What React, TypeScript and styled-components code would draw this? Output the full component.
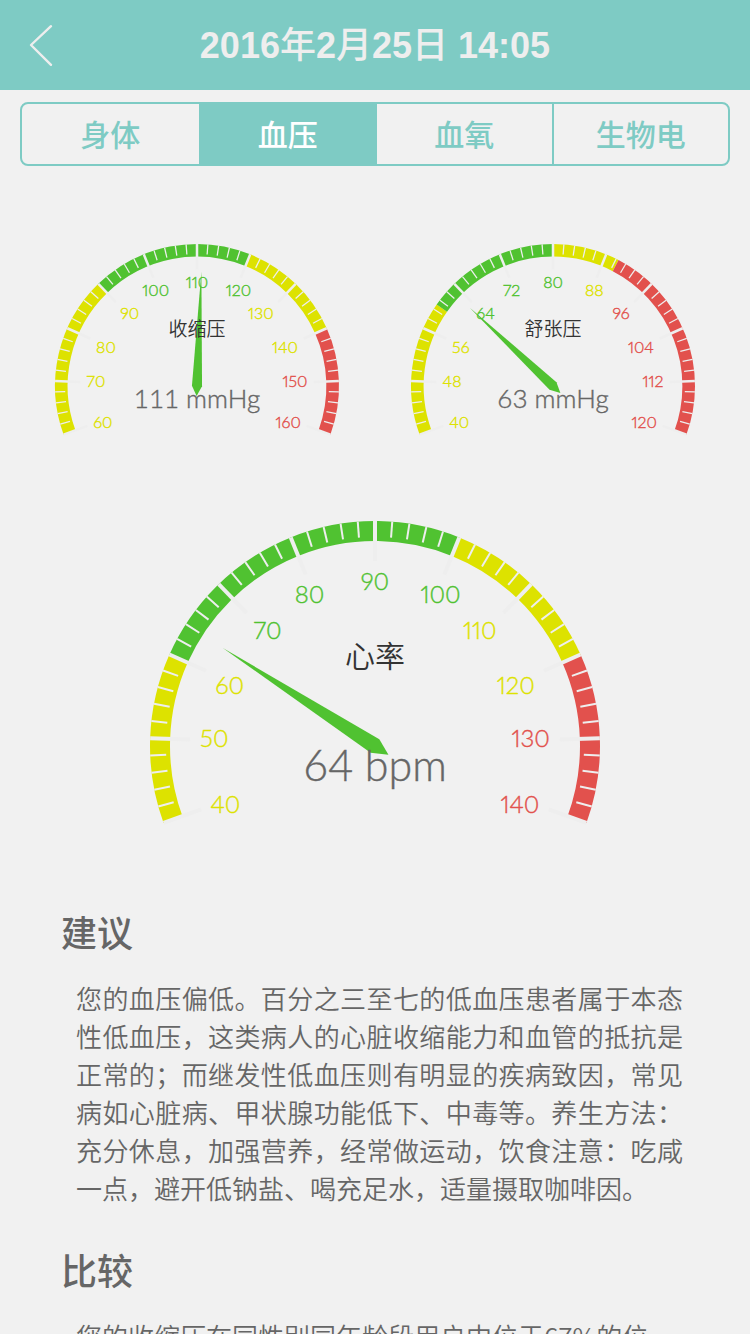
import React from 'react';
import styled, { createGlobalStyle } from 'styled-components';

const color = {
  teal: '#7ecbc4',
  page: '#f1f1f1',
  light: '#eeeeee',
  text: '#666666',
  title: '#333333',
  low: '#dde200',
  good: '#50c231',
  high: '#e2514d',
};

const GlobalStyle = createGlobalStyle`
  *, *::before, *::after { box-sizing: border-box; }
  body {
    margin: 0;
    background: ${color.page};
    color: ${color.text};
    font-family: 'Liberation Sans', 'Noto Sans CJK SC', sans-serif;
  }
`;

const Screen = styled.div`
  display: flex;
  flex-direction: column;
  height: 100vh;
  overflow: hidden;
`;

const Header = styled.header`
  flex: none;
  display: grid;
  grid-template-columns: 80px 1fr 80px;
  align-items: center;
  height: 90px;
  background: ${color.teal};
`;

const BackButton = styled.button`
  display: flex;
  align-items: center;
  height: 90px;
  padding: 0 0 0 28px;
  border: 0;
  background: none;
  cursor: pointer;
`;

const PageTitle = styled.h1`
  margin: 0;
  padding-bottom: 2px;
  color: ${color.light};
  font-size: 36px;
  font-weight: 700;
  line-height: 44px;
  text-align: center;
  white-space: nowrap;
`;

const Hanzi = styled.span`
  font-family: 'Noto Sans CJK SC', sans-serif;
  font-weight: 500;
`;

const Tabs = styled.nav`
  flex: none;
  display: grid;
  grid-template-columns: repeat(4, 1fr);
  height: 64px;
  margin: 12px 20px 0;
  border: 2px solid ${color.teal};
  border-radius: 8px;
  overflow: hidden;
`;

const Tab = styled.button<{ $active?: boolean }>`
  padding: 0 0 2px;
  border: 0;
  background: ${(p) => (p.$active ? color.teal : 'transparent')};
  color: ${(p) => (p.$active ? '#ffffff' : color.teal)};
  font-family: 'Noto Sans CJK SC', sans-serif;
  font-size: 30px;
  font-weight: 500;
  line-height: 44px;
  cursor: pointer;

  & + & {
    border-left: 2px solid ${color.teal};
  }
`;

const GaugePair = styled.section`
  flex: none;
  display: grid;
  grid-template-columns: 1fr 1fr;
  gap: 72px;
  padding: 78px 55px 0;
`;

const GaugeSingle = styled.section`
  flex: none;
  width: 60%;
  margin: 84px auto 0;
`;

const GaugeSvg = styled.svg`
  display: block;
  width: 100%;
  height: auto;
  overflow: visible;
`;

const GaugeText = styled.text<{ $color: string }>`
  font-family: Lato, sans-serif;
  font-weight: 300;
  fill: ${(p) => p.$color};
  stroke: ${(p) => p.$color};
  stroke-width: 0.4;
`;

const ScaleLabel = styled(GaugeText)`
  font-variant-numeric: proportional-nums;
`;

const GaugeTitle = styled.text`
  font-family: 'Noto Sans CJK SC', sans-serif;
  font-weight: 350;
  fill: ${color.title};
`;

const Article = styled.main`
  padding: 80px 67px 0 61px;
`;

const Block = styled.section`
  margin-bottom: 38px;
`;

const Heading = styled.h2`
  margin: 0 0 24px;
  font-family: 'Noto Sans CJK SC', sans-serif;
  font-size: 36px;
  font-weight: 500;
  line-height: 48px;
`;

const Paragraph = styled.p`
  margin: 0;
  padding-left: 15px;
  font-family: 'Noto Sans CJK SC', sans-serif;
  font-size: 26px;
  font-weight: 350;
  line-height: 38px;
  text-align: justify;
`;

const START = 200;
const SWEEP = 220;

interface GaugeProps {
  title: string;
  unit: string;
  value: number;
  min: number;
  max: number;
  zones: [number, string][];
  radius: number;
  labelSize: number;
  titleSize: number;
  valueSize: number;
}

function Gauge({
  title, unit, value, min, max, zones, radius: r, labelSize, titleSize, valueSize,
}: GaugeProps) {
  const k = r / 225;
  const point = (fraction: number, dist: number) => {
    const a = ((START - SWEEP * fraction) * Math.PI) / 180;
    return { x: r + Math.cos(a) * dist, y: r - Math.sin(a) * dist, cos: Math.cos(a), sin: Math.sin(a) };
  };
  const band = 20 * k;
  const mid = r - band / 2;

  const arcs = zones.map(([end, fill], i) => {
    const a = point(i ? zones[i - 1][0] : 0, mid);
    const b = point(end, mid);
    return <path key={end} d={`M${a.x} ${a.y}A${mid} ${mid} 0 0 1 ${b.x} ${b.y}`} stroke={fill} strokeWidth={band} fill="none" />;
  });

  const ticks = Array.from({ length: 51 }, (_, i) => {
    const major = i % 5 === 0;
    const a = point(i / 50, r);
    const b = point(i / 50, r - (major ? 40 : 16) * k);
    return <line key={i} x1={a.x} y1={a.y} x2={b.x} y2={b.y} stroke={color.light} strokeWidth={(major ? 4 : 2) * k} />;
  });

  const labels = Array.from({ length: 11 }, (_, i) => {
    const f = i / 10;
    const p = point(f, 175 * k);
    const anchor = p.cos < -0.4 ? 'start' : p.cos > 0.4 ? 'end' : 'middle';
    const drop = p.sin > 0.4 ? 19 * k : 7 * k;
    const zone = zones.find(([end]) => f <= end + 0.0001) ?? zones[zones.length - 1];
    return (
      <ScaleLabel key={i} $color={zone[1]} x={p.x} y={p.y + drop} textAnchor={anchor} fontSize={labelSize}>
        {Math.round(min + (max - min) * f)}
      </ScaleLabel>
    );
  });

  const f = (value - min) / (max - min);
  const tip = point(f, 181 * k);
  const w = 8 * k;
  const zone = zones.find(([end]) => f <= end) ?? zones[zones.length - 1];
  const needle = [
    [tip.x, tip.y],
    [r + tip.sin * w, r + tip.cos * w],
    [r - tip.cos * 2 * w, r + tip.sin * 2 * w],
    [r - tip.sin * w, r - tip.cos * w],
  ].map((q) => q.join(',')).join(' ');

  return (
    <GaugeSvg viewBox={`0 0 ${2 * r} ${Math.round(r * 1.36)}`} role="img" aria-label={`${title} ${value} ${unit}`}>
      {arcs}
      {ticks}
      {labels}
      <polygon points={needle} fill={zone[1]} />
      <GaugeTitle x={r} y={r * 0.6 + titleSize * 0.36} textAnchor="middle" fontSize={titleSize}>{title}</GaugeTitle>
      <GaugeText $color={color.text} x={r} y={r * 1.154} textAnchor="middle" fontSize={valueSize}>
        {value} {unit}
      </GaugeText>
    </GaugeSvg>
  );
}

const small = { radius: 142, labelSize: 16, titleSize: 19, valueSize: 26 };
const large = { radius: 225, labelSize: 24, titleSize: 30, valueSize: 43 };
const tabs = ['身体', '血压', '血氧', '生物电'];

export default function App() {
  return (
    <Screen lang="zh-CN">
      <GlobalStyle />
      <Header>
        <BackButton aria-label="返回">
          <svg width="26" height="44" viewBox="0 0 26 44" fill="none" stroke={color.light} strokeWidth="2.4" strokeLinecap="round" strokeLinejoin="round">
            <path d="M23 3.2L3 22L23 41.8" />
          </svg>
        </BackButton>
        <PageTitle>
          2016<Hanzi>年</Hanzi>2<Hanzi>月</Hanzi>25<Hanzi>日</Hanzi> 14:05
        </PageTitle>
      </Header>
      <Tabs>
        {tabs.map((t) => (
          <Tab key={t} $active={t === '血压'}>{t}</Tab>
        ))}
      </Tabs>
      <GaugePair>
        <Gauge {...small} title="收缩压" unit="mmHg" value={111} min={60} max={160}
          zones={[[0.3, color.low], [0.6, color.good], [0.8, color.low], [1, color.high]]} />
        <Gauge {...small} title="舒张压" unit="mmHg" value={63} min={40} max={120}
          zones={[[0.25, color.low], [0.5, color.good], [0.625, color.low], [1, color.high]]} />
      </GaugePair>
      <GaugeSingle>
        <Gauge {...large} title="心率" unit="bpm" value={64} min={40} max={140}
          zones={[[0.2, color.low], [0.6, color.good], [0.8, color.low], [1, color.high]]} />
      </GaugeSingle>
      <Article>
        <Block>
          <Heading>建议</Heading>
          <Paragraph>
            您的血压偏低。百分之三至七的低血压患者属于本态性低血压，这类病人的心脏收缩能力和血管的抵抗是正常的；而继发性低血压则有明显的疾病致因，常见病如心脏病、甲状腺功能低下、中毒等。养生方法：充分休息，加强营养，经常做运动，饮食注意：吃咸一点，避开低钠盐、喝充足水，适量摄取咖啡因。
          </Paragraph>
        </Block>
        <Block>
          <Heading>比较</Heading>
          <Paragraph>您的收缩压在同性别同年龄段用户中位于67%的位</Paragraph>
        </Block>
      </Article>
    </Screen>
  );
}
